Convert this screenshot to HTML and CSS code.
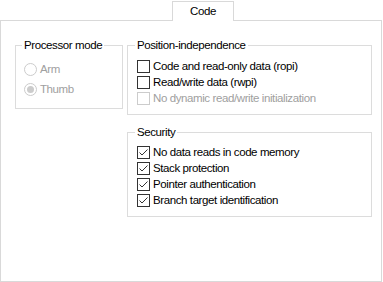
FILE: index.html
```html
<!DOCTYPE html>
<html lang="en">
	<head>
		<meta charset="UTF-8" />
		<title>Code</title>
		<link rel="stylesheet" href="styles.css">
	</head>
	<body>
		<div class="tabs">
			<div class="tab">Code</div>
		</div>
		<div class="page">
			<fieldset class="group processor">
				<legend>Processor mode</legend>
				<div class="option disabled">
					<span class="radio"></span>Arm
				</div>
				<div class="option disabled">
					<span class="radio checked"></span>Thumb
				</div>
			</fieldset>
			<div class="column">
				<fieldset class="group position">
					<legend>Position-independence</legend>
					<div class="option">
						<span class="box"></span>Code and read-only data (ropi)
					</div>
					<div class="option">
						<span class="box"></span>Read/write data (rwpi)
					</div>
					<div class="option disabled">
						<span class="box"></span>No dynamic read/write initialization
					</div>
				</fieldset>
				<fieldset class="group security">
					<legend>Security</legend>
					<div class="option">
						<span class="box"><svg width="11" height="11" viewBox="0 0 11 11"><polyline points="1.5,5.5 4,8 9.5,2.5" /></svg></span>No data reads in code memory
					</div>
					<div class="option">
						<span class="box"><svg width="11" height="11" viewBox="0 0 11 11"><polyline points="1.5,5.5 4,8 9.5,2.5" /></svg></span>Stack protection
					</div>
					<div class="option">
						<span class="box"><svg width="11" height="11" viewBox="0 0 11 11"><polyline points="1.5,5.5 4,8 9.5,2.5" /></svg></span>Pointer authentication
					</div>
					<div class="option">
						<span class="box"><svg width="11" height="11" viewBox="0 0 11 11"><polyline points="1.5,5.5 4,8 9.5,2.5" /></svg></span>Branch target identification
					</div>
				</fieldset>
			</div>
		</div>
	</body>
</html>
```

FILE: styles.css
```css
body {
	margin: 0;
	font-family: "Liberation Sans", Arial, sans-serif;
	font-size: 11.5px;
	letter-spacing: -0.4px;
	color: #000;
	background-color: #fff;
}
.tabs {
	display: flex;
	padding: 1px 0 0 172px;
}
.tab {
	position: relative;
	z-index: 1;
	box-sizing: border-box;
	width: 62px;
	height: 20px;
	margin-bottom: -1px;
	padding-top: 1px;
	border: 1px solid #d9d9d9;
	border-bottom: none;
	background-color: #fff;
	text-align: center;
	line-height: 16px;
}
.page {
	box-sizing: border-box;
	display: flex;
	gap: 4px;
	width: 382px;
	height: 262px;
	padding: 16px 0 0 14px;
	border: 1px solid #d9d9d9;
}
.column {
	display: flex;
	flex-direction: column;
	gap: 9px;
}
.group {
	box-sizing: border-box;
	margin: 0;
	border: 1px solid #dcdcdc;
	min-width: 0;
}
.group legend {
	padding: 0 2px;
	margin-left: -2px;
	line-height: 16px;
}
.processor {
	width: 108px;
	height: 72px;
	padding: 6px 0 0 8px;
}
.position {
	width: 245px;
	height: 78px;
	padding: 5px 0 0 9px;
}
.security {
	width: 245px;
	height: 93px;
	padding: 4px 0 0 9px;
}
.option {
	display: flex;
	align-items: center;
	height: 16px;
	white-space: nowrap;
}
.processor .option {
	height: 20px;
}
.option.disabled {
	color: #a0a0a0;
}
.box {
	box-sizing: border-box;
	display: flex;
	align-items: center;
	justify-content: center;
	width: 13px;
	height: 13px;
	margin-right: 3px;
	border: 1px solid #333;
}
.box svg {
	fill: none;
	stroke: #333;
	stroke-width: 1;
}
.disabled .box {
	border-color: #cccccc;
}
.radio {
	box-sizing: border-box;
	display: flex;
	align-items: center;
	justify-content: center;
	width: 13px;
	height: 13px;
	margin-right: 3px;
	border: 1px solid #cccccc;
	border-radius: 50%;
}
.radio.checked::after {
	content: "";
	width: 7px;
	height: 7px;
	border-radius: 50%;
	background-color: #cccccc;
}
```
